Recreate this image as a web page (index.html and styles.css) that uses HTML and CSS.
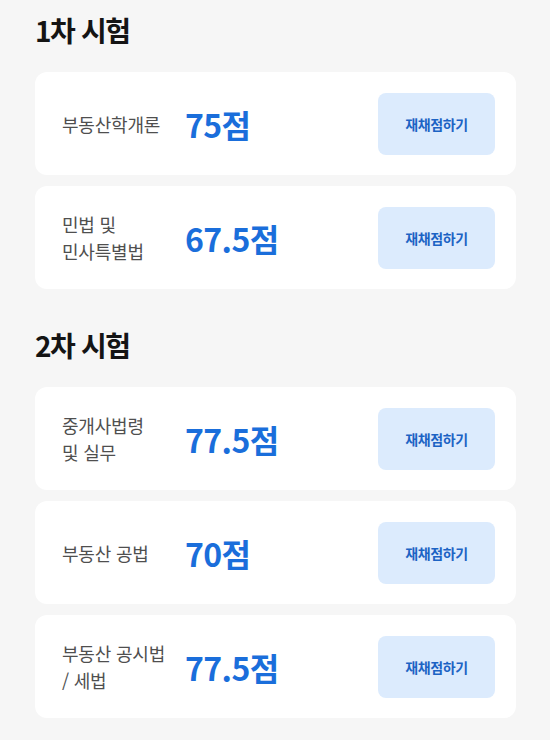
FILE: index.html
```html
<!DOCTYPE html>
<html lang="ko">
<head>
<meta charset="utf-8">
<title>시험 점수</title>
<link rel="stylesheet" href="styles.css">
</head>
<body>
<main class="page">
  <section class="section">
    <h2 class="section-title">1차 시험</h2>
    <div class="cards">
      <div class="card">
        <div class="label">부동산학개론</div>
        <div class="score">75점</div>
        <button class="regrade">재채점하기</button>
      </div>
      <div class="card">
        <div class="label">민법 및<br>민사특별법</div>
        <div class="score">67.5점</div>
        <button class="regrade">재채점하기</button>
      </div>
    </div>
  </section>
  <section class="section second">
    <h2 class="section-title">2차 시험</h2>
    <div class="cards">
      <div class="card">
        <div class="label">중개사법령<br>및 실무</div>
        <div class="score">77.5점</div>
        <button class="regrade">재채점하기</button>
      </div>
      <div class="card">
        <div class="label">부동산 공법</div>
        <div class="score">70점</div>
        <button class="regrade">재채점하기</button>
      </div>
      <div class="card">
        <div class="label">부동산 공시법<br>/ 세법</div>
        <div class="score">77.5점</div>
        <button class="regrade">재채점하기</button>
      </div>
    </div>
  </section>
</main>
</body>
</html>
```

FILE: styles.css
```css
html, body {
  margin: 0;
  padding: 0;
  background: #f6f6f6;
}
body {
  font-family: "Noto Sans CJK KR", "Noto Sans", sans-serif;
  color: #111;
}
.page {
  padding: 12px 34px 20px 35px;
}
.section-title {
  margin: 0 0 24px 0;
  font-size: 28px;
  line-height: 36px;
  font-weight: 700;
  letter-spacing: -1.4px;
  color: #141414;
}
.second {
  margin-top: 38px;
}
.cards {
  display: flex;
  flex-direction: column;
  gap: 11px;
}
.card {
  display: flex;
  align-items: center;
  background: #ffffff;
  border-radius: 12px;
  padding: 21px 21px 20px 27px;
  height: 62px;
}
.label {
  width: 123px;
  flex: none;
  font-size: 18px;
  line-height: 27px;
  color: #4f4f4f;
  letter-spacing: -0.2px;
}
.score {
  flex: 1;
  font-size: 32px;
  font-weight: 700;
  color: #1a6edb;
  letter-spacing: -0.6px;
  line-height: 40px;
}
.regrade {
  flex: none;
  width: 117px;
  height: 62px;
  border: none;
  border-radius: 8px;
  background: #dcebfd;
  color: #1c63c4;
  font-family: "Noto Sans CJK KR", "Noto Sans", sans-serif;
  font-size: 14px;
  font-weight: 700;
  letter-spacing: -0.4px;
  padding: 0;
}
```
